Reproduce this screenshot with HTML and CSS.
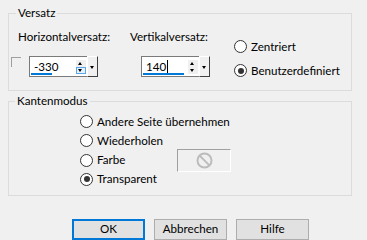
FILE: index.html
```html
<!DOCTYPE html>
<html lang="de">
<head>
  <meta charset="UTF-8" />
  <title>Versatz</title>
  <link rel="stylesheet" href="styles.css">
</head>
<body>
  <div class="dialog">
    <fieldset class="group offset">
      <legend>Versatz</legend>
      <div class="field first">
        <span class="label">Horizontalversatz:</span>
        <div class="field-row">
          <span class="check"></span>
          <div class="spin">
            <div class="value">-330<span class="bar" style="width: 21px"></span></div>
            <div class="arrows">
              <span class="up"></span>
              <span class="down active"></span>
            </div>
            <div class="drop"><span></span></div>
          </div>
        </div>
      </div>
      <div class="field second">
        <span class="label">Vertikalversatz:</span>
        <div class="spin">
          <div class="value">140<span class="caret"></span><span class="bar" style="width: 41px"></span></div>
          <div class="arrows">
            <span class="up"></span>
            <span class="down"></span>
          </div>
          <div class="drop"><span></span></div>
        </div>
      </div>
      <div class="choices">
        <label class="radio"><span class="dot"></span>Zentriert</label>
        <label class="radio"><span class="dot on"></span>Benutzerdefiniert</label>
      </div>
    </fieldset>

    <fieldset class="group edges">
      <legend>Kantenmodus</legend>
      <div class="edge-list">
        <label class="radio"><span class="dot"></span>Andere Seite übernehmen</label>
        <label class="radio"><span class="dot"></span>Wiederholen</label>
        <div class="color-row">
          <label class="radio"><span class="dot"></span>Farbe</label>
          <div class="swatch">
            <svg width="17" height="17" viewBox="0 0 17 17">
              <circle cx="8.5" cy="8.5" r="7" fill="none" stroke="#bcbcbc" stroke-width="2" />
              <line x1="3.6" y1="3.6" x2="13.4" y2="13.4" stroke="#bcbcbc" stroke-width="2" />
            </svg>
          </div>
        </div>
        <label class="radio"><span class="dot on"></span>Transparent</label>
      </div>
    </fieldset>

    <div class="buttons">
      <button class="default">OK</button>
      <button>Abbrechen</button>
      <button>Hilfe</button>
    </div>
  </div>
</body>
</html>
```

FILE: styles.css
```css
body {
  margin: 0;
  background: #f0f0f0;
  font-family: Lato, "Noto Sans", sans-serif;
  font-size: 11.6px;
  line-height: 16px;
  color: #000;
  overflow: hidden;
}

.dialog {
  padding: 5px 15px 0 8px;
}

.group {
  margin: 0;
  border: 1px solid #dcdcdc;
  padding: 0;
}

.group legend {
  margin-left: 6px;
  padding: 0 2px;
}

/* Versatz */
.offset {
  display: flex;
  align-items: flex-start;
  padding: 8px 0 10px 1px;
}

.field {
  display: flex;
  flex-direction: column;
  gap: 11px;
}

.field.first {
  width: 113px;
}

.field.first .label {
  padding-left: 8px;
}

.field-row {
  display: flex;
  align-items: flex-start;
  gap: 8px;
}

.field.second {
  width: 81px;
  margin-left: 7px;
}

.field.second .spin {
  margin-left: 11px;
}

.check {
  width: 9px;
  height: 9px;
  margin: 1px 0 0 1px;
  border-top: 1px solid #a0a0a0;
  border-left: 1px solid #a0a0a0;
}

.spin {
  display: flex;
  width: 69px;
  height: 21px;
  box-sizing: border-box;
  border: 1px solid #7a7a7a;
  border-right: none;
  background: #fff;
}

.value {
  position: relative;
  width: 42px;
  padding-left: 4px;
  line-height: 19px;
}

.bar {
  position: absolute;
  left: 1px;
  bottom: 1px;
  height: 2px;
  background: #0078d7;
}

.caret {
  display: inline-block;
  width: 1px;
  height: 14px;
  margin-left: 1px;
  vertical-align: -3px;
  background: #000;
}

.arrows {
  display: flex;
  flex-direction: column;
  width: 10px;
  margin: 3px 1px 0 0;
}

.arrows span {
  position: relative;
  height: 7px;
  box-sizing: border-box;
  background: #f0f0f0;
}

.arrows .up::after,
.arrows .down::after,
.drop span {
  content: "";
  position: absolute;
  left: 2px;
  border-left: 2.5px solid transparent;
  border-right: 2.5px solid transparent;
}

.arrows .up::after {
  top: 2px;
  border-bottom: 3px solid #000;
}

.arrows .down::after {
  top: 2px;
  border-top: 3px solid #000;
}

.arrows .down.active {
  border: 1px solid #5ba4e5;
  background: #e5f1fb;
}

.arrows .down.active::after {
  left: 1px;
  top: 1px;
}

.drop {
  position: relative;
  width: 11px;
  margin-top: -1px;
  height: 21px;
  box-sizing: border-box;
  background: #f0f0f0;
  border-left: 1px solid #fff;
  border-top: 1px solid #fff;
  border-right: 1px solid #404040;
  border-bottom: 1px solid #404040;
}

.drop span {
  top: 9px;
  left: 2px;
  border-top: 3px solid #000;
}

.choices {
  display: flex;
  flex-direction: column;
  gap: 5px;
  margin: 8px 0 0 23px;
}

/* radio buttons */
.radio {
  display: flex;
  align-items: center;
  gap: 4px;
  height: 19px;
}

.dot {
  position: relative;
  width: 11px;
  height: 11px;
  border: 1px solid #333;
  border-radius: 50%;
  background: #fff;
}

.dot.on::after {
  content: "";
  position: absolute;
  left: 2.5px;
  top: 2.5px;
  width: 6px;
  height: 6px;
  border-radius: 50%;
  background: #333;
}

/* Kantenmodus */
.edges {
  margin-top: 2px;
  padding: 3px 0 6px 0;
}

.edge-list {
  display: flex;
  flex-direction: column;
  gap: 0.3px;
  margin-left: 71px;
}

.color-row {
  display: flex;
  align-items: center;
  height: 19px;
}

.color-row .radio {
  width: 97px;
}

.swatch {
  display: flex;
  align-items: center;
  justify-content: center;
  width: 52px;
  height: 21px;
  background: #f0f0f0;
  border-top: 1px solid #a0a0a0;
  border-left: 1px solid #a0a0a0;
  border-right: 1px solid #fff;
  border-bottom: 1px solid #fff;
}

/* buttons */
.buttons {
  display: flex;
  gap: 9px;
  margin: 23px 0 0 64px;
}

button {
  width: 73px;
  height: 21px;
  padding: 0;
  font: inherit;
  color: #000;
  background: #e1e1e1;
  border: 1px solid #adadad;
}

button.default {
  border: 2px solid #0078d7;
}
```
